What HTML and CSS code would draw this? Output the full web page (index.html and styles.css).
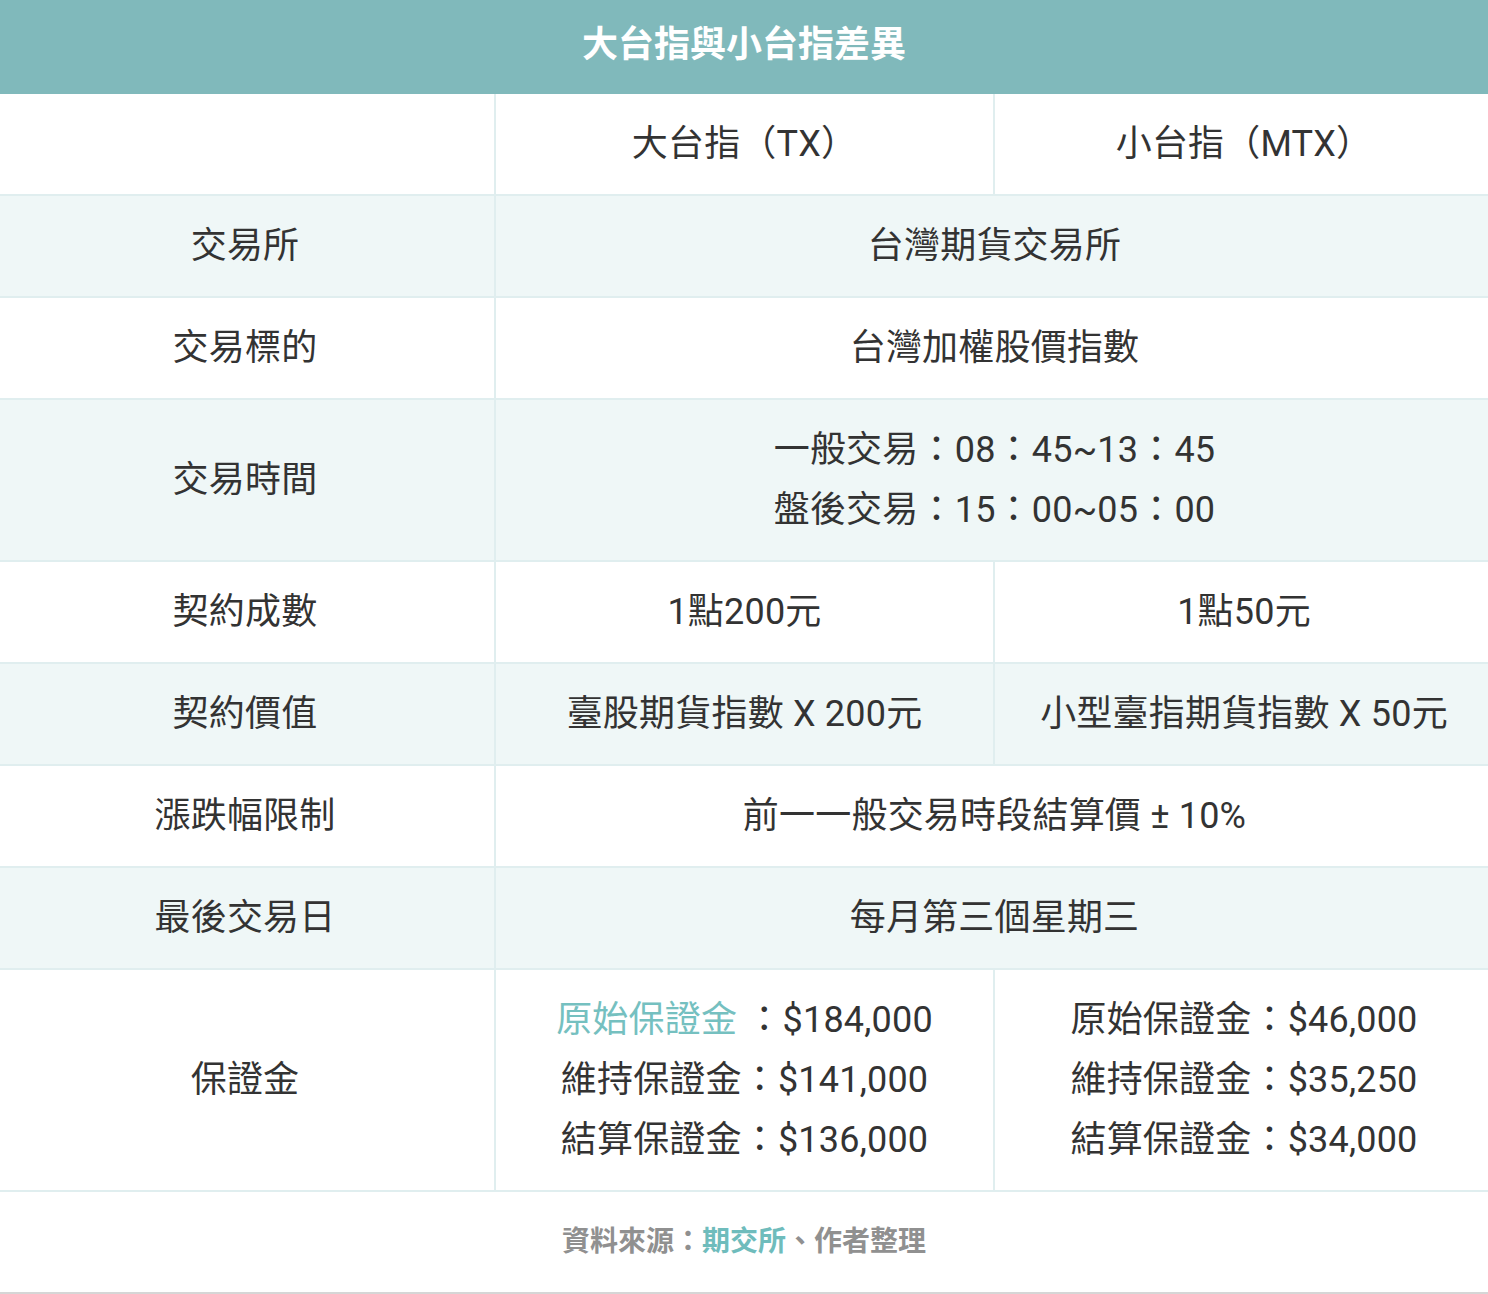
FILE: index.html
```html
<!DOCTYPE html>
<html lang="zh-Hant">
<head>
<meta charset="utf-8">
<title>大台指與小台指差異</title>
<link rel="stylesheet" href="styles.css">
</head>
<body>
<div class="wrap">
  <div class="title">大台指與小台指差異</div>
  <table class="cmp">
    <colgroup>
      <col class="c1"><col class="c2"><col class="c3">
    </colgroup>
    <tbody>
      <tr class="head">
        <td></td>
        <td>大台指（TX）</td>
        <td>小台指（MTX）</td>
      </tr>
      <tr class="alt">
        <td>交易所</td>
        <td colspan="2">台灣期貨交易所</td>
      </tr>
      <tr>
        <td>交易標的</td>
        <td colspan="2">台灣加權股價指數</td>
      </tr>
      <tr class="alt">
        <td>交易時間</td>
        <td colspan="2">一般交易：08：45~13：45<br>盤後交易：15：00~05：00</td>
      </tr>
      <tr>
        <td>契約成數</td>
        <td>1點200元</td>
        <td>1點50元</td>
      </tr>
      <tr class="alt">
        <td>契約價值</td>
        <td>臺股期貨指數 X 200元</td>
        <td>小型臺指期貨指數 X 50元</td>
      </tr>
      <tr>
        <td>漲跌幅限制</td>
        <td colspan="2">前一一般交易時段結算價 ± 10%</td>
      </tr>
      <tr class="alt">
        <td>最後交易日</td>
        <td colspan="2">每月第三個星期三</td>
      </tr>
      <tr>
        <td>保證金</td>
        <td><a class="link">原始保證金</a> ：$184,000<br>維持保證金：$141,000<br>結算保證金：$136,000</td>
        <td>原始保證金：$46,000<br>維持保證金：$35,250<br>結算保證金：$34,000</td>
      </tr>
    </tbody>
  </table>
  <div class="source">資料來源：<span class="src-link">期交所</span>、作者整理</div>
</div>
</body>
</html>
```
FILE: styles.css
```css
html, body {
  margin: 0;
  padding: 0;
  background: #ffffff;
}
body {
  font-family: Roboto, "Noto Sans CJK TC", "Noto Sans", sans-serif;
  color: #333333;
}
.wrap {
  width: 1488px;
}
.title {
  height: 94px;
  line-height: 90px;
  background: #80b9bb;
  color: #ffffff;
  font-size: 36px;
  font-weight: 700;
  text-align: center;
}
.cmp {
  width: 100%;
  border-collapse: collapse;
  table-layout: fixed;
}
.c1 { width: 495px; }
.c2 { width: 499px; }
.c3 { width: 494px; }
.cmp td {
  border: 2px solid #e0eeef;
  padding: 20px 0;
  line-height: 60px;
  font-size: 36px;
  text-align: center;
  vertical-align: middle;
  white-space: nowrap;
  letter-spacing: 0.2px;
}
.cmp tr.head td {
  border-top: none;
}
.cmp td:first-child {
  border-left: none;
  padding-right: 4px;
}
.cmp td:last-child {
  border-right: none;
  padding-left: 5px;
}
.cmp tr.alt td {
  background: #eff7f7;
}
.link {
  color: #75c0c0;
}
.source {
  height: 100px;
  line-height: 100px;
  text-align: center;
  font-size: 28px;
  font-weight: 700;
  color: #909090;
  border-bottom: 2px solid #d6d6d6;
}
.src-link {
  color: #6fbcbc;
}
```
